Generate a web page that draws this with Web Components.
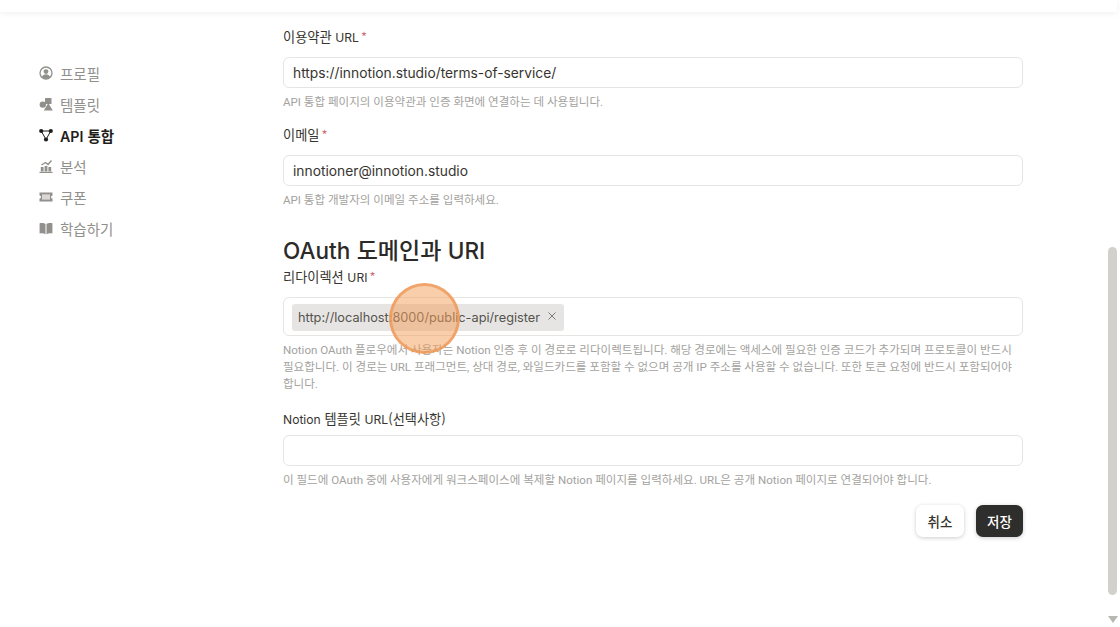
<!DOCTYPE html>
<html lang="ko">
<head>
<meta charset="utf-8">
<title>API 통합</title>
<style>
  html, body { margin: 0; height: 100%; background: #fff; overflow: hidden; }
  body { font-family: "Noto Sans CJK KR", "Noto Sans", sans-serif; color: #37352f; }
  .en { font-family: Inter, "Noto Sans", sans-serif; font-size: var(--en, .92em); line-height: 0; }
</style>
</head>
<body>
<app-shell>
  <side-nav slot="nav">
    <nav-item label="프로필" icon="profile"></nav-item>
    <nav-item label="템플릿" icon="template"></nav-item>
    <nav-item label="API 통합" icon="api" active></nav-item>
    <nav-item label="분석" icon="chart"></nav-item>
    <nav-item label="쿠폰" icon="ticket"></nav-item>
    <nav-item label="학습하기" icon="book"></nav-item>
  </side-nav>
  <form-field label="이용약관 URL" required value="https://innotion.studio/terms-of-service/">API 통합 페이지의 이용약관과 인증 화면에 연결하는 데 사용됩니다.</form-field>
  <form-field label="이메일" required value="innotioner@innotion.studio" style="margin-top:14px">API 통합 개발자의 이메일 주소를 입력하세요.</form-field>
  <section-title><span class="en">OAuth</span> 도메인과 <span class="en">URI</span></section-title>
  <form-field label="리다이렉션 URI" required chip="http://localhost:8000/public-api/register" style="margin-top:2px">Notion OAuth 플로우에서 사용자는 Notion 인증 후 이 경로로 리다이렉트됩니다. 해당 경로에는 액세스에 필요한 인증 코드가 추가되며 프로토콜이 반드시 필요합니다. 이 경로는 URL 프래그먼트, 상대 경로, 와일드카드를 포함할 수 없으며 공개 IP 주소를 사용할 수 없습니다. 또한 토큰 요청에 반드시 포함되어야 합니다.</form-field>
  <form-field label="Notion 템플릿 URL(선택사항)" style="margin-top:16px;--label-gap:6px">이 필드에 OAuth 중에 사용자에게 워크스페이스에 복제할 Notion 페이지를 입력하세요. URL은 공개 Notion 페이지로 연결되어야 합니다.</form-field>
  <form-actions>
    <action-button>취소</action-button>
    <action-button primary>저장</action-button>
  </form-actions>
  <click-spot slot="overlay"></click-spot>
</app-shell>

<script>
// icons for the side menu
const icons = {
  profile: `<circle cx="7" cy="7" r="6" fill="none" stroke="currentColor" stroke-width="1.3"/><circle cx="7" cy="5.6" r="2.4"/><path d="M2.8 11.2c.7-2 2.3-3 4.2-3s3.5 1 4.2 3A6 6 0 0 1 7 13a6 6 0 0 1-4.2-1.800z"/>`,
  template: `<rect x="6" y="1" width="6.500" height="6" rx=".6"/><circle cx="3.800" cy="7.600" r="3.200"/><path d="M9.300 6l4.500 7.500H4.800z"/>`,
  api: `<path d="M2.200 3L7 11.500 11.800 3z" fill="none" stroke="currentColor" stroke-width="1"/><circle cx="2.200" cy="3" r="2.100"/><circle cx="11.800" cy="3" r="2.100"/><circle cx="7" cy="11.500" r="2.100"/>`,
  chart: `<path d="M.5 12.800h13v1.200H.5z"/><path d="M1.800 8h2.800v4.500H1.800zM5.600 7h2.800v5.500H5.600zM9.400 8h2.800v4.500H9.400z"/><path d="M2.500 6L6.500 3.500 9 5.500 12.500 1.500" fill="none" stroke="currentColor" stroke-width="1.400"/>`,
  ticket: `<path fill-rule="evenodd" d="M.5 2.500h13v3a1.500 1.500 0 0 0 0 3v3H.5v-3a1.500 1.500 0 0 0 0-3zM3 4.500v5h8v-5z"/><path d="M3 4.500h8v5H3z" opacity=".35"/>`,
  book: `<path d="M.6 2.300c2.200-.5 4.500-.3 5.900.8V13.200c-1.400-1-3.700-1.200-5.900-.7zM13.400 2.300c-2.200-.5-4.500-.3-5.900.8V13.200c1.400-1 3.700-1.200 5.900-.7z"/>`,
};

// latin runs are set smaller in Inter, next to the korean text
const en = (text) => text.replace(/[A-Za-z]+/g, (m) => `<span class="en">${m}</span>`);
const enStyle = `.en { font-family: Inter, "Noto Sans", sans-serif; font-size: var(--en, .92em); line-height: 0; }`;

class AppShell extends HTMLElement {
  constructor() {
    super();
    this.attachShadow({ mode: "open" });
    this.shadowRoot.innerHTML = `
      <style>
        :host { display: block; position: relative; height: 627px; overflow: hidden; }
        .top { height: 12px; background: #fff; box-shadow: 0 1px 6px rgba(0, 0, 0, 0.07); margin-right: 3px; }
        .body { display: flex; height: 615px; }
        .nav { width: 283px; flex: none; }
        .main { width: 740px; flex: none; padding-top: 15px; }
        .rest { flex: 1; display: flex; justify-content: flex-end; padding-right: 3px; }
      </style>
      <div class="top"></div>
      <div class="body">
        <div class="nav"><slot name="nav"></slot></div>
        <div class="main"><slot></slot></div>
        <div class="rest"><scroll-bar></scroll-bar></div>
      </div>
      <slot name="overlay"></slot>
    `;
  }
}
customElements.define("app-shell", AppShell);

class SideNav extends HTMLElement {
  constructor() {
    super();
    this.attachShadow({ mode: "open" });
    this.shadowRoot.innerHTML = `
      <style>
        :host { display: flex; flex-direction: column; gap: 9px; padding: 50px 0 0 39px; }
      </style>
      <slot></slot>
    `;
  }
}
customElements.define("side-nav", SideNav);

class NavItem extends HTMLElement {
  constructor() {
    super();
    this.attachShadow({ mode: "open" });
    const active = this.hasAttribute("active");
    this.shadowRoot.innerHTML = `
      <style>
        :host { --en: .98em; display: flex; align-items: center; gap: 7px; height: 22px; font-size: 14.500px; color: ${active ? "#1f1e1b" : "#91908c"}; font-weight: ${active ? 600 : 400}; }
        svg { width: 14px; height: 14px; fill: currentColor; flex: none; }
        ${enStyle}
      </style>
      <svg viewBox="0 0 14 14">${icons[this.getAttribute("icon")]}</svg>
      <span>${en(this.getAttribute("label"))}</span>
    `;
  }
}
customElements.define("nav-item", NavItem);

class FormField extends HTMLElement {
  constructor() {
    super();
    this.attachShadow({ mode: "open" });
    const value = this.getAttribute("value") || "";
    const chip = this.getAttribute("chip");
    const star = this.hasAttribute("required") ? `<span class="star">*</span>` : "";
    const inner = chip
      ? `<span class="chip"><span>${chip}</span><svg class="x" viewBox="0 0 10 10"><path d="M1.500 1.500l7 7M8.500 1.500l-7 7"/></svg></span>`
      : value;
    this.shadowRoot.innerHTML = `
      <style>
        :host { display: block; }
        .label { font-size: 13.200px; line-height: 20px; color: #37352f; height: 20px; margin-bottom: var(--label-gap, 10px); }
        .star { color: #d0706e; margin-left: 2px; font-size: 13px; }
        .box { box-sizing: border-box; height: 31px; border: 1px solid #e6e5e2; border-radius: 6px; padding: 0 9px; display: flex; align-items: center; font-family: Inter, "Noto Sans", sans-serif; font-size: 13.800px; color: #37352f; }
        .box.chips { height: 39px; padding: 6px 8px 0; align-items: flex-start; }
        .chip { display: inline-flex; align-items: center; height: 27px; padding: 0 7px 0 6px; background: #e6e5e3; border-radius: 3px; font-size: 12.750px; color: #55534e; gap: 7px; }
        .x { width: 10px; height: 10px; margin-top: -3px; fill: none; stroke: #7c7a75; stroke-width: 1; }
        .help { font-family: Roboto, "Noto Sans CJK KR", sans-serif; font-size: 11.550px; word-break: keep-all; line-height: 17px; color: #a3a29e; margin-top: 6px; }
        ${enStyle}
      </style>
      <div class="label">${en(this.getAttribute("label"))}${star}</div>
      <div class="box ${chip ? "chips" : ""}">${inner}</div>
      <div class="help"><slot></slot></div>
    `;
  }
}
customElements.define("form-field", FormField);

class SectionTitle extends HTMLElement {
  constructor() {
    super();
    this.attachShadow({ mode: "open" });
    this.shadowRoot.innerHTML = `
      <style>
        :host { --en: .98em; display: block; font-size: 23px; line-height: 32px; font-weight: 500; color: #2b2a27; margin-top: 24px; }
      </style>
      <slot></slot>
    `;
  }
}
customElements.define("section-title", SectionTitle);

class FormActions extends HTMLElement {
  constructor() {
    super();
    this.attachShadow({ mode: "open" });
    this.shadowRoot.innerHTML = `
      <style>
        :host { display: flex; justify-content: flex-end; gap: 12px; margin-top: 16px; }
      </style>
      <slot></slot>
    `;
  }
}
customElements.define("form-actions", FormActions);

class ActionButton extends HTMLElement {
  constructor() {
    super();
    this.attachShadow({ mode: "open" });
    const primary = this.hasAttribute("primary");
    this.shadowRoot.innerHTML = `
      <style>
        :host { display: flex; align-items: center; justify-content: center; box-sizing: border-box; height: 32px; width: ${primary ? 47 : 48}px; border-radius: 7px; font-size: 13.500px; font-weight: 500; background: ${primary ? "#2e2e2c" : "#fff"}; color: ${primary ? "#fff" : "#37352f"}; box-shadow: 0 1px 4px rgba(0, 0, 0, 0.2); }
      </style>
      <slot></slot>
    `;
  }
}
customElements.define("action-button", ActionButton);

class ScrollBar extends HTMLElement {
  constructor() {
    super();
    this.attachShadow({ mode: "open" });
    this.shadowRoot.innerHTML = `
      <style>
        :host { display: flex; flex-direction: column; align-items: center; width: 9px; padding-top: 235px; }
        .thumb { width: 9px; height: 348px; border-radius: 5px; background: #d3d1cb; }
        .arrow { width: 0; height: 0; margin-top: 21px; border-left: 5px solid transparent; border-right: 5px solid transparent; border-top: 7px solid #b9b7b1; }
      </style>
      <div class="thumb"></div>
      <div class="arrow"></div>
    `;
  }
}
customElements.define("scroll-bar", ScrollBar);

// the orange circle that marks the click, over the form
class ClickSpot extends HTMLElement {
  constructor() {
    super();
    this.attachShadow({ mode: "open" });
    this.shadowRoot.innerHTML = `
      <style>
        :host { position: absolute; left: 389px; top: 283px; box-sizing: border-box; width: 71px; height: 71px; border-radius: 50%; background: rgba(244, 158, 88, 0.5); border: 3px solid rgba(238, 150, 84, 0.75); }
      </style>
    `;
  }
}
customElements.define("click-spot", ClickSpot);
</script>
</body>
</html>
